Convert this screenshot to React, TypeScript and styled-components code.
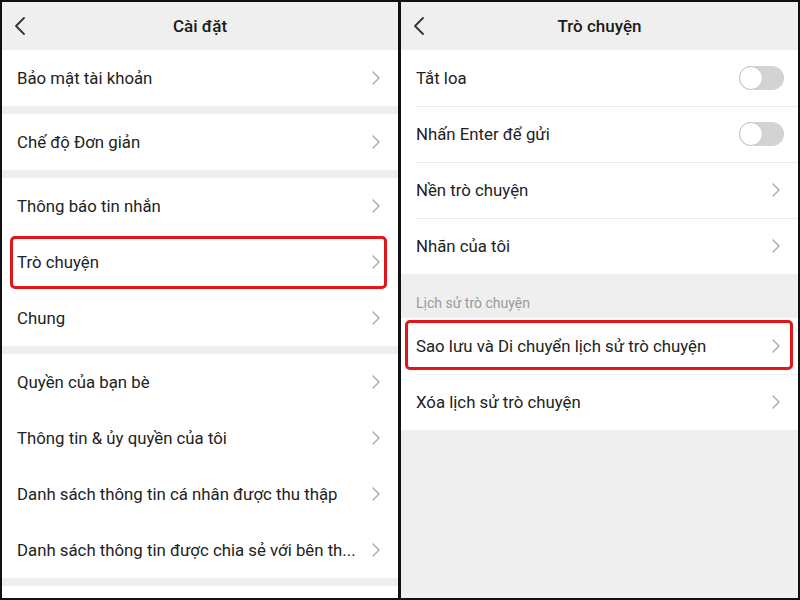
import React from 'react'
import styled, { createGlobalStyle, css } from 'styled-components'

const GlobalStyle = createGlobalStyle`
    html, body {
        margin: 0;
        padding: 0;
        background: #ffffff;
    }
    body {
        font-family: Roboto, "Noto Sans", "Liberation Sans", sans-serif;
        color: #222222;
    }
`

type Item = {
    label: string
    toggle?: boolean
    highlight?: boolean
}

const settingsGroups: Item[][] = [
    [{ label: 'Bảo mật tài khoản' }],
    [{ label: 'Chế độ Đơn giản' }],
    [
        { label: 'Thông báo tin nhắn' },
        { label: 'Trò chuyện', highlight: true },
        { label: 'Chung' }
    ],
    [
        { label: 'Quyền của bạn bè' },
        { label: 'Thông tin & ủy quyền của tôi' },
        { label: 'Danh sách thông tin cá nhân được thu thập' },
        { label: 'Danh sách thông tin được chia sẻ với bên th...' }
    ]
]

const chatItems: Item[] = [
    { label: 'Tắt loa', toggle: true },
    { label: 'Nhấn Enter để gửi', toggle: true },
    { label: 'Nền trò chuyện' },
    { label: 'Nhãn của tôi' }
]

const historyItems: Item[] = [
    { label: 'Sao lưu và Di chuyển lịch sử trò chuyện', highlight: true },
    { label: 'Xóa lịch sử trò chuyện' }
]

const BackIcon = () => (
    <svg width="12" height="20" viewBox="0 0 12 20" fill="none">
        <path d="M10 2 L2 10 L10 18" stroke="#333" strokeWidth="1.8" strokeLinecap="round" strokeLinejoin="round" />
    </svg>
)

const ChevronIcon = () => (
    <Chevron width="8" height="14" viewBox="0 0 8 14" fill="none">
        <path d="M1 1 L7 7 L1 13" stroke="#a6a6a6" strokeWidth="1.3" strokeLinecap="round" strokeLinejoin="round" />
    </Chevron>
)

const Row: React.FunctionComponent<{ item: Item; divided?: boolean; box: 'left' | 'right' }> = ({ item, divided, box }) => (
    <RowContainer $divided={divided} $highlight={item.highlight} $box={box}>
        <RowLabel>{item.label}</RowLabel>
        {item.toggle ? (
            <Toggle>
                <Knob />
            </Toggle>
        ) : (
            <ChevronIcon />
        )}
    </RowContainer>
)

export default function App() {
    return (
        <>
            <GlobalStyle />
            <Frame>
                <Panel>
                    <Header>
                        <BackButton><BackIcon /></BackButton>
                        <Title>Cài đặt</Title>
                    </Header>
                    {settingsGroups.map((group, index) => (
                        <Group key={index} $gap>
                            {group.map(item => (
                                <Row key={item.label} item={item} box="left" />
                            ))}
                        </Group>
                    ))}
                    <BottomFill />
                </Panel>
                <Divider />
                <Panel>
                    <Header>
                        <BackButton><BackIcon /></BackButton>
                        <Title>Trò chuyện</Title>
                    </Header>
                    <Group>
                        {chatItems.map((item, index) => (
                            <Row key={item.label} item={item} divided={index > 0} box="right" />
                        ))}
                    </Group>
                    <SectionLabel>Lịch sử trò chuyện</SectionLabel>
                    <Group>
                        {historyItems.map((item, index) => (
                            <Row key={item.label} item={item} divided={index > 0} box="right" />
                        ))}
                    </Group>
                </Panel>
            </Frame>
        </>
    )
}

const Frame = styled.div`
    box-sizing: border-box;
    width: 800px;
    height: 600px;
    border: 2px solid #111111;
    display: grid;
    grid-template-columns: 396px 3px 1fr;
    overflow: hidden;
    background: #efefef;
`

const Divider = styled.div`
    background: #111111;
`

const Panel = styled.div`
    display: flex;
    flex-direction: column;
    background: #efefef;
    min-width: 0;
`

const Header = styled.div`
    position: relative;
    height: 48px;
    display: flex;
    align-items: center;
    justify-content: center;
    background: #efefef;
    flex-shrink: 0;
`

const BackButton = styled.div`
    position: absolute;
    left: 12px;
    top: 14px;
    display: flex;
`

const Title = styled.div`
    font-size: 17px;
    font-weight: 500;
    color: #1a1a1a;
`

const Group = styled.div<{ $gap?: boolean }>`
    background: #ffffff;
    display: flex;
    flex-direction: column;
    flex-shrink: 0;
    margin-bottom: ${({ $gap }) => ($gap ? '8px' : '0')};
`

const RowContainer = styled.div<{ $divided?: boolean; $highlight?: boolean; $box: 'left' | 'right' }>`
    position: relative;
    height: 56px;
    display: flex;
    align-items: center;
    justify-content: space-between;
    gap: 12px;
    padding: 0 18px 0 15px;
    box-sizing: border-box;
    ${({ $divided }) =>
        $divided &&
        css`
            &::before {
                content: '';
                position: absolute;
                left: 15px;
                right: 0;
                top: 0;
                height: 1px;
                background: #ececec;
            }
        `}
    ${({ $highlight, $box }) =>
        $highlight &&
        css`
            &::after {
                content: '';
                position: absolute;
                border: 3px solid #e0161d;
                border-radius: 5px;
                ${$box === 'left'
                    ? 'left: 8px; right: 11px; top: 2px; bottom: 1px;'
                    : 'left: 4px; right: 5px; top: 2px; bottom: 4px;'}
            }
        `}
`

const RowLabel = styled.div`
    font-size: 16.8px;
    color: #222222;
    white-space: nowrap;
    min-width: 0;
`

const Chevron = styled.svg`
    flex-shrink: 0;
`

const Toggle = styled.div`
    position: relative;
    width: 45px;
    height: 24px;
    border-radius: 12px;
    background: #d3d3d3;
    flex-shrink: 0;
    margin-right: -4px;
`

const Knob = styled.div`
    position: absolute;
    left: 0;
    top: 0;
    width: 24px;
    height: 24px;
    box-sizing: border-box;
    border-radius: 50%;
    background: #ffffff;
    border: 1px solid #c4c4c4;
`

const SectionLabel = styled.div`
    height: 44px;
    flex-shrink: 0;
    box-sizing: border-box;
    padding: 20px 0 0 15px;
    font-size: 14px;
    line-height: 18px;
    color: #9a9a9a;
`

const BottomFill = styled.div`
    flex: 1;
    background: #ffffff;
`
